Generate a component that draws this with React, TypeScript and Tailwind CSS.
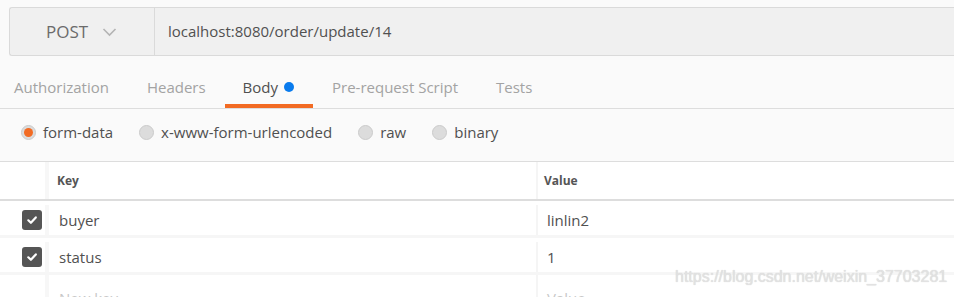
import React from 'react';

const FONT = { fontFamily: '"Open Sans", "Noto Sans", sans-serif' };

const tabs = ['Authorization', 'Headers', 'Body', 'Pre-request Script', 'Tests'];
const bodyTypes = ['form-data', 'x-www-form-urlencoded', 'raw', 'binary'];

const rows = [
  { key: 'buyer', value: 'linlin2', checked: true },
  { key: 'status', value: '1', checked: true },
];

// checked box in the first column
const CheckBox = () => (
  <div className="w-5 h-5 rounded-[3px] bg-[#555555] flex items-center justify-center">
    <svg width="12" height="12" viewBox="0 0 12 12" fill="none">
      <path d="M2.3 6.3 L4.9 8.8 L9.8 3.4" stroke="white" strokeWidth="2.2" strokeLinecap="round" strokeLinejoin="round" />
    </svg>
  </div>
);

const Radio = ({ on }: { on: boolean }) => (
  <div className="w-[15px] h-[15px] rounded-full bg-[#dcdcdc] border border-[#cbcbcb] flex items-center justify-center">
    {on && <div className="w-[9px] h-[9px] rounded-full bg-[#f26b23]" />}
  </div>
);

export default function App() {
  return (
    <div className="relative w-[954px] h-[297px] overflow-hidden bg-[#fafafa] text-[#505050]" style={FONT}>
      {/* request bar */}
      <div className="pt-[7px] pl-[9px]">
        <div className="flex h-[49px] bg-[#f0f0f0] border border-[#dadada] border-r-0 rounded-l-[3px]">
          <div className="w-[145px] flex items-center border-r border-[#dadada] pl-[36px] gap-[14px]">
            <span className="text-[17px] text-[#6b6b6b]">POST</span>
            <svg width="15" height="10" viewBox="0 0 15 10" fill="none">
              <path d="M1.5 2 L7.5 8 L13.5 2" stroke="#b4b4b4" strokeWidth="1.6" />
            </svg>
          </div>
          <div className="flex items-center pl-[13px] text-[15px] text-[#505050]">localhost:8080/order/update/14</div>
        </div>
      </div>

      {/* tabs */}
      <div className="mt-px flex h-[52px] border-b border-[#dddddd] -ml-[5px] text-[15px]">
        {tabs.map((t) => {
          const active = t === 'Body';
          return (
            <div
              key={t}
              className={
                active
                  ? 'flex items-center h-full pl-[18px] pr-[19px] pt-[13px] border-b-[4px] border-[#f26b23] text-[#505050] gap-[6px]'
                  : 'flex items-center h-full px-[19px] pt-[9px] text-[#a3a3a3]'
              }
            >
              <span>{t}</span>
              {active && <span className="w-[10px] h-[10px] rounded-full bg-[#097bed]" />}
            </div>
          );
        })}
      </div>

      {/* body type radios */}
      <div className="flex items-center h-[46px] pl-[21px] text-[15px] text-[#505050]">
        {bodyTypes.map((b, i) => (
          <div key={b} className="flex items-center gap-[7px] mr-[26px]">
            <Radio on={i === 0} />
            <span>{b}</span>
          </div>
        ))}
      </div>

      {/* key/value table */}
      <div className="mt-[6px] border-t border-[#dddddd] bg-white">
        <div className="flex h-[39px] border-b-2 border-[#dddddd] text-[12px] font-bold text-[#555555]">
          <div className="w-[49px] border-r-4 border-[#f7f7f7]" />
          <div className="w-[489px] flex items-center pl-[8px] border-r-2 border-[#f5f5f5]">Key</div>
          <div className="flex-1 flex items-center pl-[6px]">Value</div>
        </div>
        {rows.map((r) => (
          <div key={r.key} className="flex h-[37px] pt-[4px] border-b-[3px] border-[#f6f6f6] text-[15px] text-[#505050]">
            <div className="w-[49px] flex items-center justify-end pr-[3px] border-r-4 border-[#f7f7f7]">
              {r.checked && <CheckBox />}
            </div>
            <div className="w-[489px] flex items-center pl-[10px] border-r-2 border-[#f5f5f5]">{r.key}</div>
            <div className="flex-1 flex items-center pl-[9px]">{r.value}</div>
          </div>
        ))}
        <div className="flex h-[37px] text-[15px] text-[#c8c8c8]">
          <div className="w-[49px] border-r-4 border-[#f7f7f7]" />
          <div className="w-[489px] flex items-center pl-[10px] pt-[10px] border-r-2 border-[#f5f5f5]">New key</div>
          <div className="flex-1 flex items-center pl-[9px] pt-[10px]">Value</div>
        </div>
      </div>

      {/* screenshot watermark */}
      <div
        className="absolute left-[675px] top-[265px] text-[16px] text-[#e2e2e2]"
        style={{ fontFamily: '"Liberation Sans", Arial, sans-serif', textShadow: '0 0 1px #cfcfcf' }}
      >
        https://blog.csdn.net/weixin_37703281
      </div>
    </div>
  );
}
